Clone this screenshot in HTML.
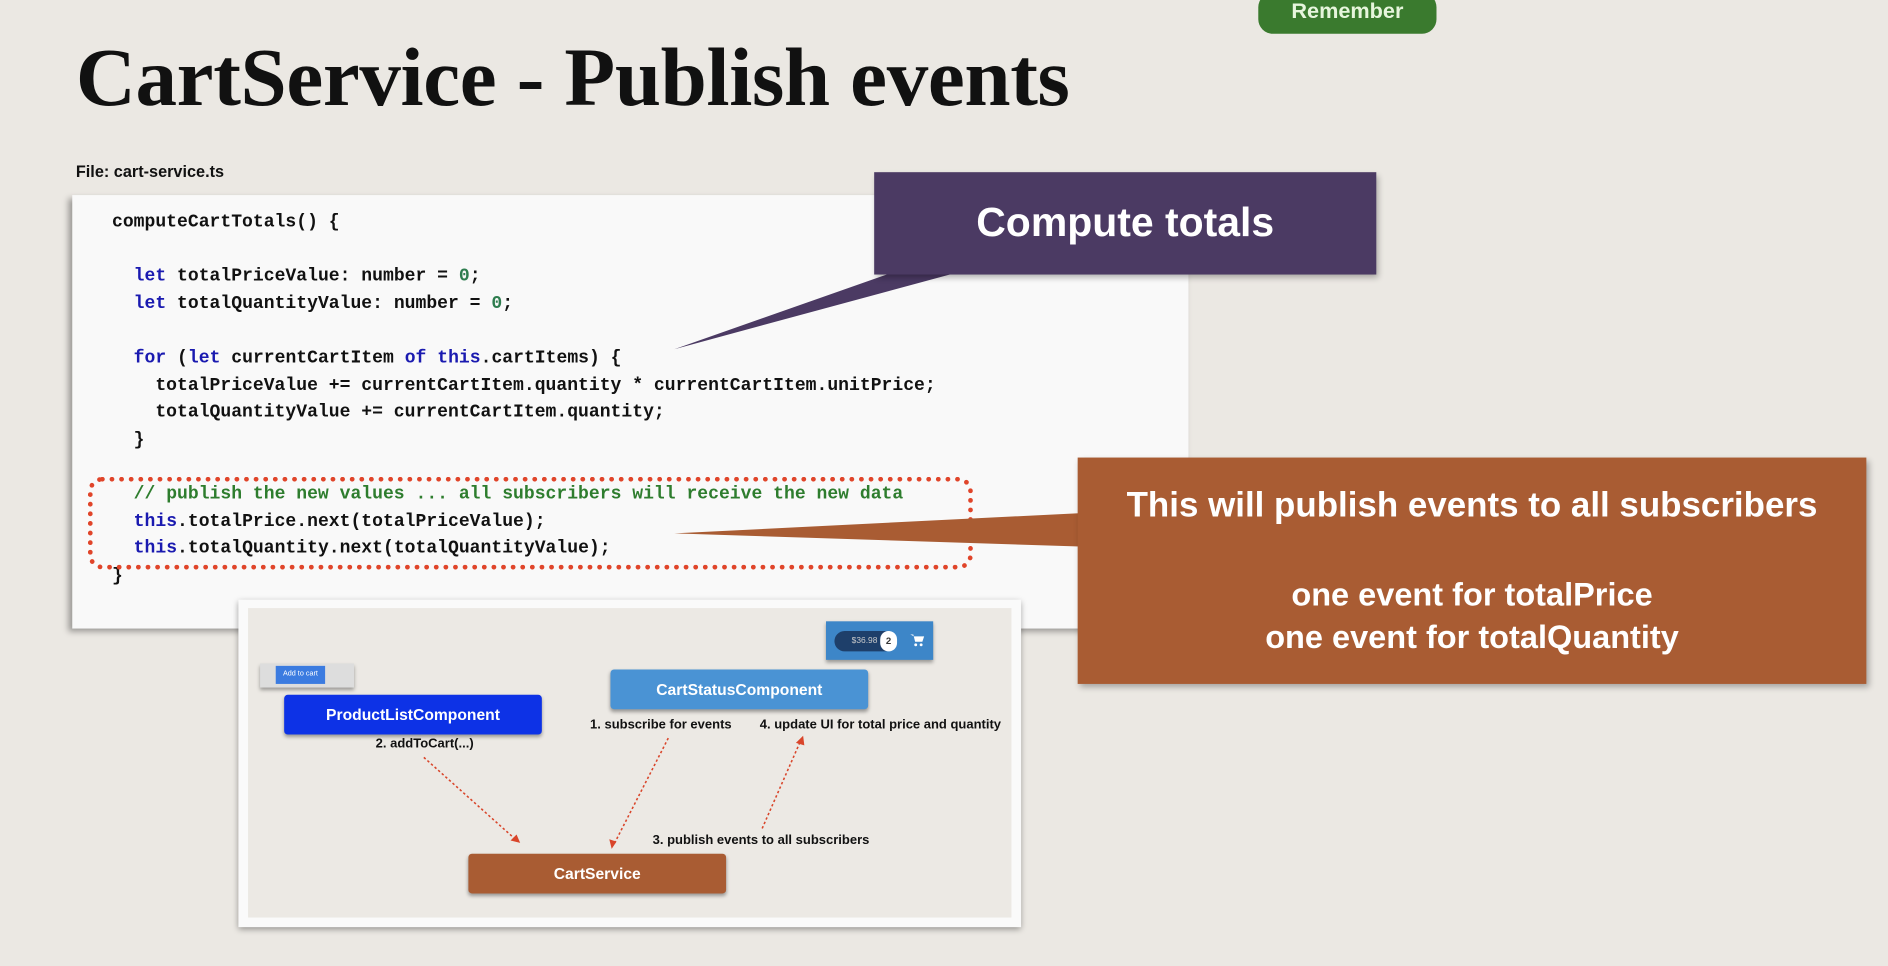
<!DOCTYPE html>
<html><head><meta charset="utf-8"><style>
html,body{margin:0;padding:0;width:1888px;height:966px;overflow:hidden;background:#ebe8e3;}
#w{position:absolute;left:0;top:0;width:1568px;height:802px;transform:scale(1.2041);transform-origin:0 0;font-family:"Liberation Sans",sans-serif;background:#ebe8e3;}
.abs{position:absolute;}
#title{left:63px;top:24px;font-family:"Liberation Serif",serif;font-weight:bold;font-size:69px;line-height:80px;color:#111;letter-spacing:-0.3px;}
#rem{left:1045px;top:-6px;width:148px;height:34px;background:#3a7a2e;border-radius:12px;color:#e6f5dc;font-weight:bold;font-size:18px;text-align:center;line-height:30px;}
#file{left:63px;top:135px;font-size:13.5px;font-weight:bold;color:#111;}
#code{left:60px;top:162px;width:927px;height:360px;background:#f9f9f9;box-shadow:-3px 3px 5px rgba(0,0,0,.35);}
pre{margin:0;position:absolute;left:93px;top:174px;font-family:"Liberation Mono",monospace;font-weight:bold;font-size:15px;line-height:22.6px;color:#111;}
.k{color:#1a1ab0}.n{color:#2e7d4f}.c{color:#2e7d2e}
#dot{left:73px;top:396px;width:727px;height:69px;border:4px dotted #e0452a;border-radius:12px;}
#purple{left:726px;top:143px;width:417px;height:85px;background:#4b3a63;color:#fff;font-weight:bold;font-size:34px;text-align:center;line-height:85px;box-shadow:2px 3px 5px rgba(0,0,0,.3);}
#orange{left:895px;top:380px;width:655px;height:188px;background:#a95c33;color:#fff;font-weight:bold;font-size:27px;text-align:center;box-shadow:2px 3px 5px rgba(0,0,0,.3);}
#img{left:198px;top:498px;width:650px;height:272px;background:#fafafa;box-shadow:0 2px 5px rgba(0,0,0,.4);}
#inner{left:8px;top:7px;width:634px;height:257px;background:#ece9e4;}
.b{position:absolute;color:#fff;font-weight:bold;text-align:center;border-radius:3px;box-shadow:0 2px 3px rgba(0,0,0,.35);}
.l{position:absolute;font-size:10.8px;font-weight:bold;color:#111;}
</style></head><body><div id="w">
<div id="title" class="abs">CartService - Publish events</div>
<div id="rem" class="abs">Remember</div>
<div id="file" class="abs">File: cart-service.ts</div>
<div id="code" class="abs"></div>
<pre>computeCartTotals() {

  <span class="k">let</span> totalPriceValue: number = <span class="n">0</span>;
  <span class="k">let</span> totalQuantityValue: number = <span class="n">0</span>;

  <span class="k">for</span> (<span class="k">let</span> currentCartItem <span class="k">of</span> <span class="k">this</span>.cartItems) {
    totalPriceValue += currentCartItem.quantity * currentCartItem.unitPrice;
    totalQuantityValue += currentCartItem.quantity;
  }

  <span class="c">// publish the new values ... all subscribers will receive the new data</span>
  <span class="k">this</span>.totalPrice.next(totalPriceValue);
  <span class="k">this</span>.totalQuantity.next(totalQuantityValue);
}</pre>
<div id="dot" class="abs"></div>
<svg class="abs" style="left:0;top:0" width="1568" height="802">
<polygon points="745,225 800,225 560,290" fill="#4b3a63"/>
<polygon points="900,426 900,454 560,443" fill="#a95c33"/>
</svg>
<div id="purple" class="abs">Compute totals</div>
<div id="orange" class="abs"><div style="margin-top:24px;font-size:29px">This will publish events to all subscribers</div><div style="margin-top:40px;line-height:35px">one event for totalPrice<br>one event for totalQuantity</div></div>
<div id="img" class="abs"><div id="inner" class="abs">
<div class="b" style="left:480px;top:11px;width:89px;height:32px;background:#3d86c8;border-radius:0"><div style="position:absolute;left:7px;top:8px;width:50px;height:17px;border-radius:9px;background:#1e3f6a;font-size:7px;font-weight:normal;line-height:17px;color:#ccc">$36.98</div><div style="position:absolute;left:45px;top:8px;width:14px;height:17px;border-radius:9px;background:#fff;color:#333;font-size:8px;line-height:17px">2</div><svg style="position:absolute;left:70px;top:10px" width="12" height="11" viewBox="0 0 12 11"><path d="M0 1h2.5l1.5 6h6l1.5-4.5H3.2z" fill="#fff"/><circle cx="4.5" cy="9.5" r="1.2" fill="#fff"/><circle cx="9" cy="9.5" r="1.2" fill="#fff"/></svg></div>
<div class="b" style="left:10px;top:46px;width:78px;height:20px;background:#ddd;border-radius:0"><div style="position:absolute;left:13px;top:2px;width:41px;height:15px;background:#3b7be0;font-size:6px;font-weight:normal;line-height:15px">Add to cart</div></div>
<div class="b" style="left:301px;top:51px;width:214px;height:33px;background:#4a93d4;font-size:13px;line-height:33px">CartStatusComponent</div>
<div class="b" style="left:30px;top:72px;width:214px;height:33px;background:#0d32e6;font-size:13px;line-height:33px">ProductListComponent</div>
<div class="l" style="left:284px;top:91px">1. subscribe for events</div>
<div class="l" style="left:425px;top:91px">4. update UI for total price and quantity</div>
<div class="l" style="left:106px;top:107px">2. addToCart(...)</div>
<div class="l" style="left:336px;top:187px">3. publish events to all subscribers</div>
<div class="b" style="left:183px;top:204px;width:214px;height:33px;background:#a95c33;font-size:13px;line-height:33px">CartService</div>
<svg style="position:absolute;left:0;top:0" width="634" height="257">
<g stroke="#d9452a" stroke-width="1.3" stroke-dasharray="2 2" fill="none">
<line x1="146" y1="124" x2="222" y2="192"/><line x1="349" y1="108" x2="304" y2="196"/><line x1="427" y1="183" x2="459" y2="110"/></g>
<g fill="#d9452a"><polygon points="226,195 218,193 223,188"/><polygon points="302,200 300,192 306,194"/><polygon points="461,106 455,112 462,114"/></g>
</svg>
</div></div>
</div></body></html>
